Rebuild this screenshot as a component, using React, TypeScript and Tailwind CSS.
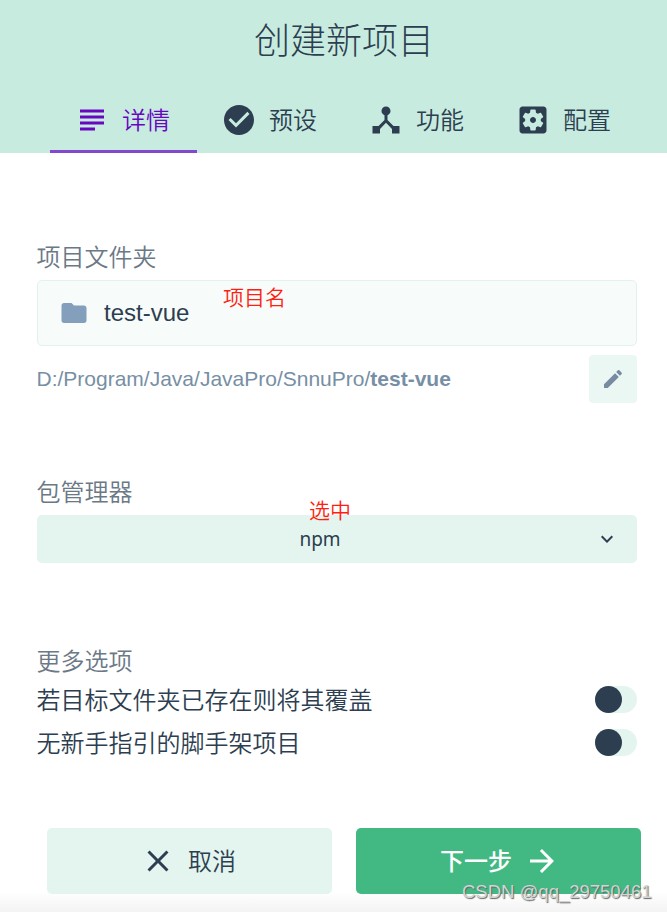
import type { ReactNode } from 'react';

const paths = {
  subject: 'M14 17H4v2h10v-2zm6-8H4v2h16V9zM4 15h16v-2H4v2zM4 5v2h16V5H4z',
  check:
    'M12 2C6.48 2 2 6.48 2 12s4.48 10 10 10 10-4.48 10-10S17.52 2 12 2zm-2 15l-5-5 1.41-1.41L10 14.17l7.59-7.59L19 8l-9 9z',
  hub: 'M17 16l-4-4V8.82C14.16 8.4 15 7.3 15 6c0-1.66-1.34-3-3-3S9 4.34 9 6c0 1.3.84 2.4 2 2.82V12l-4 4H3v5h5v-3.05l4-4.2 4 4.2V21h5v-5h-4z',
  settings:
    'M12 10c-1.1 0-2 .9-2 2s.9 2 2 2 2-.9 2-2-.9-2-2-2zm7-7H5c-1.11 0-2 .9-2 2v14c0 1.1.89 2 2 2h14c1.11 0 2-.9 2-2V5c0-1.1-.89-2-2-2zm-1.75 9c0 .23-.02.46-.05.68l1.48 1.16c.13.11.17.3.08.45l-1.4 2.42c-.09.15-.27.21-.43.15l-1.74-.7c-.36.28-.76.51-1.18.69l-.26 1.85c-.03.17-.18.3-.35.3h-2.8c-.17 0-.32-.13-.35-.29l-.26-1.85c-.43-.18-.82-.41-1.18-.69l-1.74.7c-.16.06-.34 0-.43-.15l-1.4-2.42c-.09-.15-.05-.34.08-.45l1.48-1.16c-.03-.23-.05-.46-.05-.69 0-.23.02-.46.05-.68l-1.48-1.16c-.13-.11-.17-.3-.08-.45l1.4-2.42c.09-.15.27-.21.43-.15l1.74.7c.36-.28.76-.51 1.18-.69l.26-1.85c.03-.17.18-.3.35-.3h2.8c.17 0 .32.13.35.29l.26 1.85c.43.18.82.41 1.18.69l1.74-.7c.16-.06.34 0 .43.15l1.4 2.42c.09.15.05.34-.08.45l-1.48 1.16c.03.23.05.46.05.69z',
  folder: 'M10 4H4c-1.1 0-1.99.9-1.99 2L2 18c0 1.1.9 2 2 2h16c1.1 0 2-.9 2-2V8c0-1.1-.9-2-2-2h-8l-2-2z',
  edit: 'M3 17.25V21h3.75L17.81 9.94l-3.75-3.75L3 17.25zM20.71 7.04c.39-.39.39-1.02 0-1.41l-2.34-2.34c-.39-.39-1.02-.39-1.41 0l-1.83 1.83 3.75 3.75 1.83-1.83z',
  down: 'M7.41 8.59L12 13.17l4.59-4.58L18 10l-6 6-6-6 1.41-1.41z',
  close:
    'M19 6.41L17.59 5 12 10.59 6.41 5 5 6.41 10.59 12 5 17.59 6.41 19 12 13.41 17.59 19 19 17.59 13.41 12z',
  forward: 'M12 4l-1.41 1.41L16.17 11H4v2h12.17l-5.58 5.59L12 20l8-8z',
};

function Icon({ name, className }: { name: keyof typeof paths; className: string }) {
  return (
    <svg viewBox="0 0 24 24" fill="currentColor" className={`shrink-0 ${className}`}>
      <path d={paths[name]} />
    </svg>
  );
}

const tabs: { icon: keyof typeof paths; label: string }[] = [
  { icon: 'subject', label: '详情' },
  { icon: 'check', label: '预设' },
  { icon: 'hub', label: '功能' },
  { icon: 'settings', label: '配置' },
];

function Label({ children }: { children: ReactNode }) {
  return <div className="-ml-[0.5px] h-9 pt-px text-2xl leading-9 text-[#6b7886]">{children}</div>;
}

function Option({ label }: { label: string }) {
  return (
    <div className="flex h-[43px] items-center justify-between">
      <span className="-ml-[0.5px] pt-px text-2xl leading-9">{label}</span>
      <span className="mb-[3px] h-[27px] w-[42px] rounded-full bg-[#e4f4ee]">
        <span className="block size-[27px] rounded-full bg-[#2c3e50]" />
      </span>
    </div>
  );
}

export default function App() {
  return (
    <div className="relative flex h-[912px] w-[667px] flex-col overflow-hidden bg-white font-['Liberation_Sans','Noto_Sans_CJK_SC',sans-serif] font-[350] text-[#2c3e50]">
      <header className="flex h-[153px] flex-col justify-between bg-[#c8ebdf]">
        <h1 className="h-[84px] pl-[21px] text-center text-4xl leading-[84px] font-light">创建新项目</h1>
        <nav className="flex pl-[50px]">
          {tabs.map((tab, i) => (
            <div
              key={tab.label}
              className={`flex h-[66px] w-[147px] items-center gap-3 border-b-[3px] pt-[3px] pl-6 ${
                i === 0 ? 'border-[#8647cf] text-[#6806c1]' : 'border-transparent'
              }`}
            >
              <Icon name={tab.icon} className="size-9" />
              <span className="pt-px text-2xl leading-9">{tab.label}</span>
            </div>
          ))}
        </nav>
      </header>

      <main className="pt-[86px] pr-[30px] pl-[37px]">
        <section>
          <Label>项目文件夹</Label>
          <div className="relative mt-[5px] flex h-[66px] items-center rounded-[5px] border border-[#e1f4ec] bg-[#f7fbfa] pl-[21px]">
            <Icon name="folder" className="size-[30px] text-[#849fbb]" />
            <span className="pl-[15px] text-2xl font-normal">test-vue</span>
            <span className="absolute top-px left-[185px] text-[21px] leading-8 text-[#ff1e10]">项目名</span>
          </div>
          <div className="mt-[9px] flex h-12 items-center justify-between text-[21px] font-normal text-[#778fa5]">
            <span className="-ml-[0.5px]">
              D:/Program/Java/JavaPro/SnnuPro/<b>test-vue</b>
            </span>
            <span className="flex size-12 items-center justify-center rounded-[4px] bg-[#ebf7f3]">
              <Icon name="edit" className="size-6 text-[#778ba3]" />
            </span>
          </div>
        </section>

        <section className="mt-[71px]">
          <Label>包管理器</Label>
          <div className="relative mt-[5px] flex h-12 items-center rounded-[5px] bg-[#e4f4ee] pr-[18px]">
            <span className="flex-1 pl-[8px] text-center font-['Noto_Sans'] text-[19px] font-normal">npm</span>
            <Icon name="down" className="size-6" />
            <span className="absolute -top-5 left-[272px] text-[21px] leading-8 text-[#ff1e10]">选中</span>
          </div>
        </section>

        <section className="mt-20">
          <Label>更多选项</Label>
          <Option label="若目标文件夹已存在则将其覆盖" />
          <Option label="无新手指引的脚手架项目" />
        </section>
      </main>

      <footer className="mt-auto flex h-[84px] gap-6 bg-linear-to-b from-white from-75% to-[#f4f4f4] pl-[47px]">
        <button className="flex h-[66px] w-[285px] items-center justify-center gap-3 rounded-[5px] bg-[#e4f4ee] pr-[3px] text-2xl font-[350]">
          <Icon name="close" className="size-9" />
          <span className="pt-px">取消</span>
        </button>
        <button className="flex h-[66px] w-[285px] items-center justify-center gap-3 rounded-[5px] bg-[#42b983] pl-[3px] text-2xl font-medium text-white">
          <span className="pt-px">下一步</span>
          <Icon name="forward" className="size-9" />
        </button>
      </footer>

      <div className="absolute top-[880px] left-[462px] text-[18.5px] leading-6 font-normal whitespace-nowrap text-[#d0d4d2] [text-shadow:1px_1px_1px_#666]">
        CSDN @qq_29750461
      </div>
    </div>
  );
}
